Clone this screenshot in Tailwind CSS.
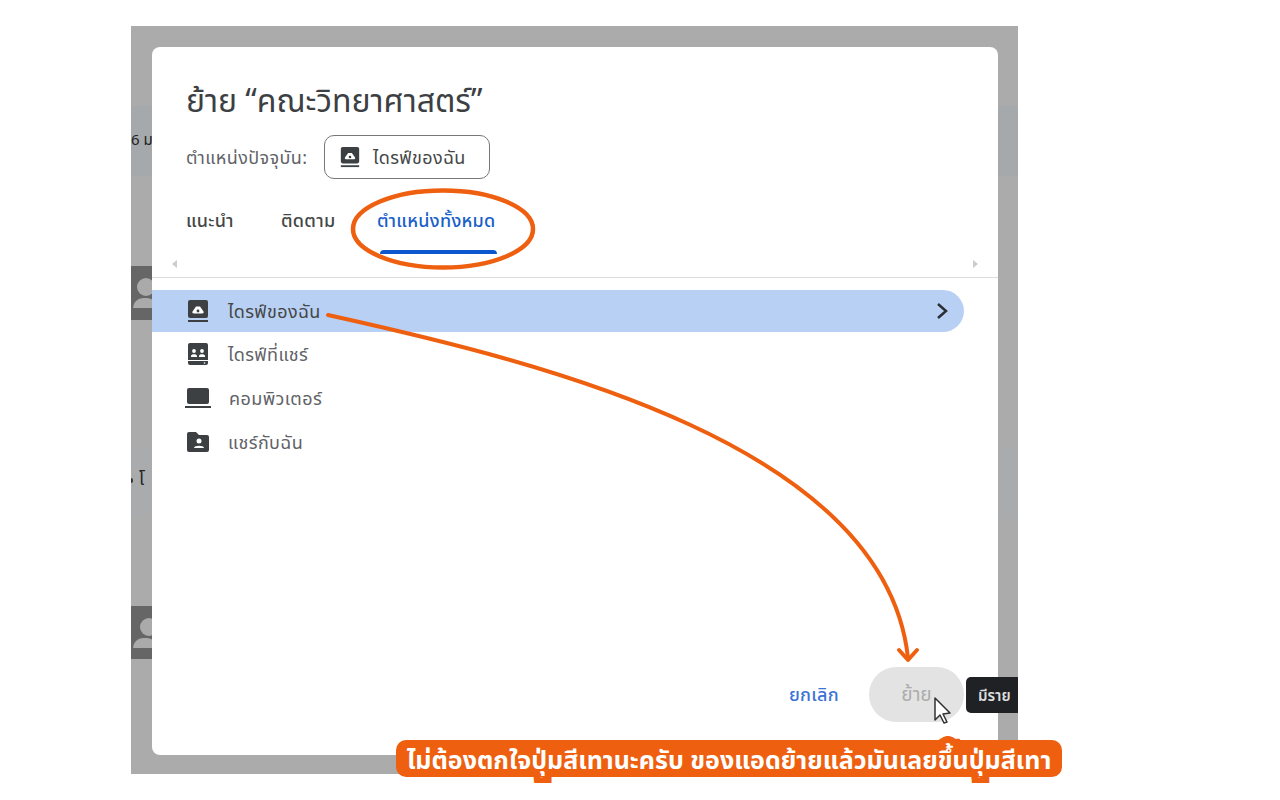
<!DOCTYPE html>
<html lang="th">
<head>
<meta charset="UTF-8">
<title>ย้าย</title>
<script src="https://cdn.jsdelivr.net/npm/@tailwindcss/browser@4"></script>
</head>
<body class="bg-white">
<div class="relative w-[1280px] h-[800px] overflow-hidden bg-white font-['Noto_Sans','Noto_Sans_Thai',sans-serif]">

  <!-- dimmed page behind the dialog -->
  <div class="absolute left-[131px] top-[26px] w-[887px] h-[748px] bg-[#ababab] overflow-hidden p-[21px]">
    <div class="absolute left-0 top-[80px] w-full h-[70px] bg-[#a6a9ac]"></div>
    <div class="absolute left-0 top-[420px] w-full h-[70px] bg-[#a9abad]"></div>
    <span class="absolute left-0 top-[103px] text-[15px] leading-5 text-[#222]">6 ม</span>
    <span class="absolute left-[8px] top-[443px] text-[17px] leading-5 text-[#222]">โ</span>
    <div class="absolute left-0 top-[452px] w-[2px] h-[5px] rounded-r bg-[#333]"></div>
    <div class="absolute left-0 top-[240px] w-[21px] h-[54px] bg-[#666]">
      <div class="absolute left-[6px] top-[12px] w-[18px] h-[18px] rounded-full bg-[#aaa]"></div>
      <div class="absolute left-[2px] top-[32px] w-[24px] h-[10px] rounded-t-full bg-[#aaa]"></div>
    </div>
    <div class="absolute left-0 top-[580px] w-[21px] h-[53px] bg-[#666]">
      <div class="absolute left-[9px] top-[12px] w-[18px] h-[18px] rounded-full bg-[#aaa]"></div>
      <div class="absolute left-[2px] top-[32px] w-[24px] h-[10px] rounded-t-full bg-[#aaa]"></div>
    </div>

    <!-- dialog -->
    <div class="relative w-[846px] h-[708px] bg-white rounded-[8px] flex flex-col">
      <h1 class="pl-[34px] pt-[31px] text-[32px] leading-[44px] text-[#3c4043]">ย้าย “คณะวิทยาศาสตร์”</h1>

      <div class="flex items-center pl-[34px] mt-[13px] h-[44px]">
        <span class="text-[18px] tracking-[0.4px] text-[#5f6368] w-[138px] whitespace-nowrap">ตำแหน่งปัจจุบัน:</span>
        <div class="flex items-center gap-[12px] w-[166px] h-[44px] pl-[14px] rounded-[10px] border border-[#777]">
          <svg class="shrink-0" width="22" height="22" viewBox="0 0 24 24"><rect x="2" y="1" width="20" height="18" rx="2" fill="#3c4043"/><path fill="#3c4043" d="M2 21h20v2H2z"/><path fill="#fff" d="M8 14.500c-1.300 0-2-1-1.500-2L10 7.500h4l3.500 5c.5 1-.2 2-1.500 2z"/><circle cx="12" cy="12" r="1.400" fill="#3c4043"/></svg>
          <span class="text-[18px] tracking-[0.4px] text-[#444746] whitespace-nowrap">ไดรฟ์ของฉัน</span>
        </div>
      </div>

      <div class="relative flex pl-[34px] mt-[11px] h-[65px] text-[18px] tracking-[0.3px] font-medium text-[#444746] whitespace-nowrap">
        <span class="w-[95px] pt-[17px]">แนะนำ</span>
        <span class="w-[96px] pt-[17px]">ติดตาม</span>
        <span class="relative pt-[17px] text-[#1a5fc8]">ตำแหน่งทั้งหมด
          <span class="absolute left-[3px] right-[-1px] top-[60px] h-[4px] rounded-t bg-[#0b57d0]"></span>
        </span>
      </div>

      <div class="flex justify-between px-[20px] h-[17px] items-center">
        <span class="w-0 h-0 border-y-[4px] border-y-transparent border-r-[5px] border-r-[#ccc]"></span>
        <span class="w-0 h-0 border-y-[4px] border-y-transparent border-l-[5px] border-l-[#ccc]"></span>
      </div>
      <div class="border-t border-[#ddd] mt-[5px]"></div>

      <!-- location list -->
      <div class="mt-[12px] flex flex-col">
        <div class="flex items-center h-[42px] w-[812px] rounded-r-full bg-[#b9d0f5] pl-[34px] pr-[16px]">
          <svg class="shrink-0" width="24" height="24" viewBox="0 0 24 24"><rect x="2" y="1" width="20" height="18" rx="2" fill="#3c4043"/><path fill="#3c4043" d="M2 21h20v2H2z"/><path fill="#fff" d="M8 14.500c-1.300 0-2-1-1.500-2L10 7.500h4l3.500 5c.5 1-.2 2-1.500 2z"/><circle cx="12" cy="12" r="1.400" fill="#3c4043"/></svg>
          <span class="ml-[18px] flex-1 text-[18px] tracking-[0.4px] text-[#444746]">ไดรฟ์ของฉัน</span>
          <svg class="w-[12px] h-[18px]" viewBox="0 0 12 18"><path d="M2 2l8 7-8 7" fill="none" stroke="#2b2f33" stroke-width="2.500"/></svg>
        </div>
        <div class="flex items-center h-[44px] pl-[34px]">
          <svg class="shrink-0" width="24" height="24" viewBox="0 0 24 24"><path fill="#3c4043" d="M4 1h16a2 2 0 0 1 2 2v18a2 2 0 0 1-2 2H4a2 2 0 0 1-2-2V3a2 2 0 0 1 2-2z"/><path fill="#fff" d="M5 14c0-2.500 6-2.500 6 0v1H5zM13 14c0-2.500 6-2.500 6 0v1h-6z"/><circle cx="8" cy="9" r="1.900" fill="#fff"/><circle cx="16" cy="9" r="1.900" fill="#fff"/><path fill="#fff" d="M2 18h20v1H2z"/><circle cx="18.500" cy="21" r=".8" fill="#fff"/></svg>
          <span class="ml-[18px] text-[18px] tracking-[0.4px] text-[#5f6368]">ไดรฟ์ที่แชร์</span>
        </div>
        <div class="flex items-center h-[44px] pl-[33px]">
          <svg class="shrink-0" width="26" height="24" viewBox="0 0 26 24"><rect x="2" y="2" width="22" height="16" rx="2" fill="#3c4043"/><path fill="#3c4043" d="M0 20h26v2H0z"/></svg>
          <span class="ml-[18px] text-[18px] tracking-[0.4px] text-[#5f6368]">คอมพิวเตอร์</span>
        </div>
        <div class="flex items-center h-[44px] pl-[34px]">
          <svg class="shrink-0" width="24" height="24" viewBox="0 0 24 24"><path fill="#3c4043" d="M3 2h7l3 3h8a2 2 0 0 1 2 2v13a2 2 0 0 1-2 2H3a2 2 0 0 1-2-2V4a2 2 0 0 1 2-2z"/><circle cx="13" cy="11" r="2.500" fill="#fff"/><path fill="#fff" d="M8 18c0-3 10-3 10 0z"/></svg>
          <span class="ml-[18px] text-[18px] tracking-[0.4px] text-[#5f6368]">แชร์กับฉัน</span>
        </div>
      </div>

      <!-- footer buttons -->
      <div class="absolute right-[34px] bottom-[33px] flex items-center">
        <span class="text-[18px] tracking-[0.3px] font-medium text-[#3d72d6] mr-[30px]">ยกเลิก</span>
        <div class="flex items-center justify-center w-[95px] h-[55px] rounded-full bg-[#e3e3e3] text-[19px] text-[#acacac]">ย้าย</div>
      </div>
    </div>

    <!-- tooltip -->
    <div class="absolute left-[835px] top-[651px] w-[70px] h-[36px] flex items-center pl-[12px] rounded-[5px] bg-[#1f2125] text-[15px] font-semibold text-[#ddd] whitespace-nowrap">มีราย</div>
  </div>

  <!-- annotations -->
  <svg class="absolute inset-0 pointer-events-none" width="1280" height="800" viewBox="0 0 1280 800">
    <ellipse cx="443" cy="229" rx="90" ry="38.500" fill="none" stroke="#ee5f0f" stroke-width="4.500"/>
    <path d="M328 315C540 362 885 445 908 658" fill="none" stroke="#ee5f0f" stroke-width="4" stroke-linecap="round"/>
    <path d="M899 650L908 660L917 650" fill="none" stroke="#ee5f0f" stroke-width="4" stroke-linecap="round" stroke-linejoin="round"/>
    <path d="M935 698v22l5-5 4 8 3-1-4-8 7-1z" fill="#fff" stroke="#333" stroke-width="1.500" stroke-linejoin="round"/>
  </svg>

  <!-- caption -->
  <div class="absolute left-[396px] top-[740px] w-[666px] h-[37px] rounded-[10px] bg-[#ee5f0f]"></div>
  <div class="absolute left-[396px] top-[740px] w-[666px] h-[38px] flex items-center justify-center whitespace-nowrap text-[25px] font-bold leading-none text-white [-webkit-text-stroke:14px_#ee5f0f] [paint-order:stroke_fill]">ไม่ต้องตกใจปุ่มสีเทานะครับ ของแอดย้ายแล้วมันเลยขึ้นปุ่มสีเทา</div>
</div>
</body>
</html>
